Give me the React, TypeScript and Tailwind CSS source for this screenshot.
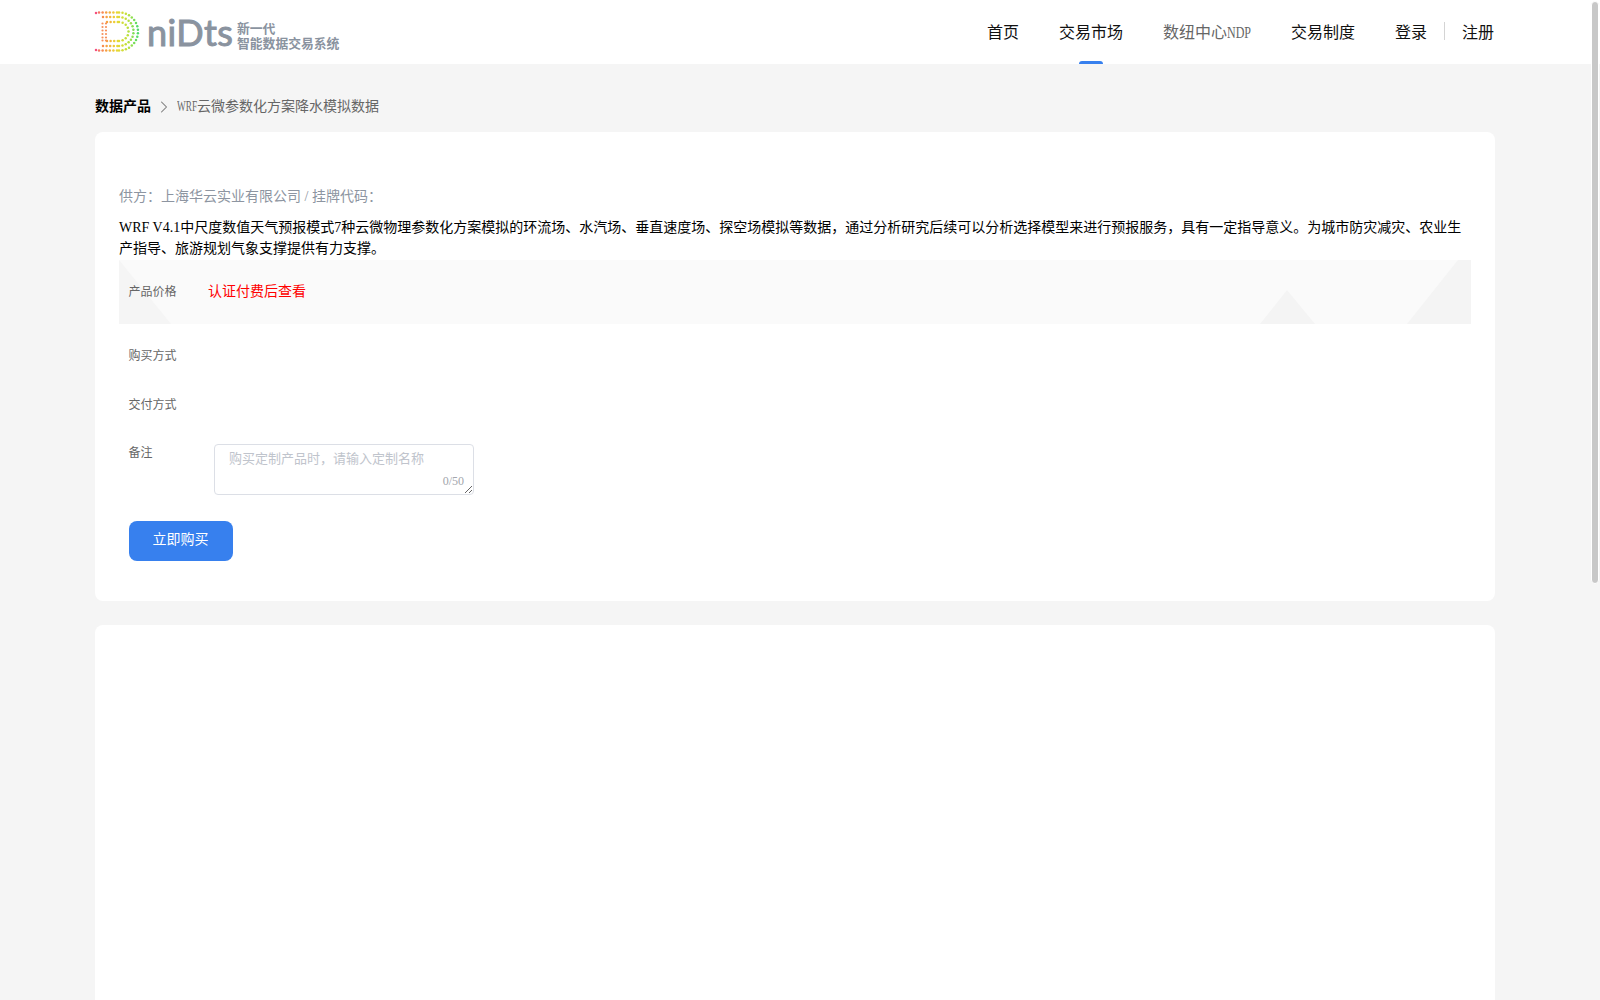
import React from 'react';
import { ChevronRight } from 'lucide-react';

const mix = (a: number[], b: number[], t: number) =>
  `rgb(${a.map((v, i) => Math.round(v + (b[i] - v) * t)).join(',')})`;

// pink on the left, through orange and yellow, to green on the right
const dotColor = (x: number) => {
  const t = Math.min(1, Math.max(0, x / 46));
  const stops = [[244, 80, 130], [248, 150, 70], [236, 214, 50], [190, 224, 60], [70, 220, 110]];
  const p = t * (stops.length - 1);
  const i = Math.min(stops.length - 2, Math.floor(p));
  return mix(stops[i], stops[i + 1], p - i);
};

const ringDots = (r: number, startX: number, step: number) => {
  const cx = 26;
  const cy = 20;
  const dots: { x: number; y: number }[] = [];
  for (let x = startX; x < cx; x += step) {
    dots.push({ x, y: cy - r }, { x, y: cy + r });
  }
  const n = Math.round((Math.PI * r) / step);
  for (let i = 0; i <= n; i++) {
    const a = -Math.PI / 2 + (Math.PI * i) / n;
    dots.push({ x: cx + r * Math.cos(a), y: cy + r * Math.sin(a) });
  }
  return dots;
};

const LogoMark = () => {
  const dots = [
    ...ringDots(19, 6, 3.6),
    ...ringDots(14.5, 10, 3.6),
    ...ringDots(9.5, 14, 3.6),
  ];
  const stem = [9.5, 13].flatMap((x) => [12, 15.5, 19, 22.5, 26, 29].map((y) => ({ x, y })));
  return (
    <svg width="48" height="42" viewBox="0 0 48 41" className="shrink-0 -ml-[2px]">
      {dots.map((d, i) => (
        <circle key={i} cx={d.x} cy={d.y} r="1.25" fill={dotColor(d.x)} />
      ))}
      {stem.map((d, i) => (
        <circle key={i} cx={d.x} cy={d.y} r="1.1" fill="#f7905a" />
      ))}
      <circle cx="3" cy="1.5" r="1.25" fill="#f4507f" />
      <circle cx="3" cy="38.5" r="1.25" fill="#f4507f" />
    </svg>
  );
};

const Logo = () => (
  <div className="flex items-center h-16 text-[#8a939f]">
    <LogoMark />
    <span className="ml-[6px] w-[84px] font-['Lato','Liberation_Sans',sans-serif] text-[36px] leading-none font-normal tracking-[0.4px] [-webkit-text-stroke:1px_#8a939f]">
      niDts
    </span>
    <div className="ml-[6px] pt-[5px] text-[12.8px] leading-[15px] font-semibold font-['Noto_Sans_CJK_SC',sans-serif]">
      <div>新一代</div>
      <div>智能数据交易系统</div>
    </div>
  </div>
);

const Header = () => (
  <header className="bg-white h-16">
    <div className="w-[1400px] h-full mx-auto flex items-center justify-between">
      <Logo />
      <nav className="flex items-center mr-[1px] pt-[1px] text-base text-[#111]">
        <a className="h-16 flex items-center">首页</a>
        <a className="relative h-16 -mt-[1px] pt-[1px] flex items-center ml-10">
          交易市场
          <span className="absolute bottom-0 left-[20px] w-6 h-[3px] rounded-t-sm bg-[#3780ee]" />
        </a>
        <a className="h-16 flex items-center ml-10 text-[#666]">
          数纽中心
          <span className="inline-block w-6 scale-x-[0.75] origin-left whitespace-nowrap">NDP</span>
        </a>
        <a className="h-16 flex items-center ml-10">交易制度</a>
        <a className="h-16 flex items-center ml-10">登录</a>
        <span className="w-px h-[18px] bg-[#d4d4d4] ml-[17px] mr-[17px] -mt-[4px]" />
        <a className="h-16 flex items-center">注册</a>
      </nav>
    </div>
  </header>
);

const Breadcrumb = () => (
  <div className="h-[68px] pt-[17px] flex items-center text-sm">
    <span className="font-bold text-black">数据产品</span>
    <ChevronRight size={20} strokeWidth={1.25} className="text-[#777] ml-[3px] mr-[3px]" />
    <span className="text-[#666]">
      <span className="inline-block w-5 scale-x-[0.66] origin-left whitespace-nowrap">WRF</span>
      云微参数化方案降水模拟数据
    </span>
  </div>
);

const PriceBand = () => (
  <div className="relative h-16 mt-[1.5px] bg-[#fafafa] flex items-center overflow-hidden">
    <svg className="absolute inset-0 w-full h-full" viewBox="0 0 1352 64" preserveAspectRatio="none">
      <polygon points="0,0 52,64 0,64" fill="#f5f5f5" />
      <polygon points="1141,64 1168,30 1196,64" fill="#f4f4f4" />
      <polygon points="1288,64 1339,0 1352,0 1352,64" fill="#f4f4f4" />
    </svg>
    <span className="relative w-[89px] pl-[9.5px] text-xs text-[#666]">产品价格</span>
    <span className="relative -mt-[1px] text-sm text-[#ff0000]">认证付费后查看</span>
  </div>
);

const FieldRow = ({ label }: { label: string }) => (
  <div className="h-[48.5px] flex items-center">
    <span className="w-[90px] pl-[9.5px] text-xs text-[#666]">{label}</span>
  </div>
);

const RemarkRow = () => (
  <div className="flex mt-[15px]">
    <span className="w-[90px] pl-[9.5px] pt-[1px] text-xs leading-[16px] text-[#666]">备注</span>
    <div className="relative ml-[5px] w-[260px] h-[51px]">
      <textarea
        placeholder="购买定制产品时，请输入定制名称"
        className="block w-full h-full px-[14px] py-[4px] text-[13px] leading-[20px] border border-[#dcdfe6] rounded bg-white outline-none placeholder:text-[#c0c4cc]"
      />
      <span className="absolute right-[10px] bottom-[6px] text-xs leading-[16px] text-[#a3a6ad]">0/50</span>
    </div>
  </div>
);

export default function App() {
  return (
    <div className="relative h-screen overflow-hidden bg-[#f5f5f5] font-['Liberation_Serif','Noto_Sans_CJK_SC',serif]">
      <div className="w-[1590px]">
        <div className="w-[1600px] bg-white">
          <div className="w-[1590px]">
            <Header />
          </div>
        </div>
        <main className="w-[1400px] mx-auto">
          <Breadcrumb />
          <section className="bg-white rounded-lg h-[469px] px-6 pt-[55px]">
            <p className="text-sm leading-5 text-[#8d95a1]">供方：上海华云实业有限公司 / 挂牌代码：</p>
            <p className="mt-[9.5px] text-sm leading-[21px] text-black">
              WRF V4.1中尺度数值天气预报模式7种云微物理参数化方案模拟的环流场、水汽场、垂直速度场、探空场模拟等数据，通过分析研究后续可以分析选择模型来进行预报服务，具有一定指导意义。为城市防灾减灾、农业生产指导、旅游规划气象支撑提供有力支撑。
            </p>
            <PriceBand />
            <div className="mt-[8px]">
              <FieldRow label="购买方式" />
              <FieldRow label="交付方式" />
            </div>
            <RemarkRow />
            <button className="block ml-[10px] mt-[26px] w-[104px] h-10 pr-[1px] pb-[2px] rounded-lg bg-[#3780ee] text-sm text-white">
              立即购买
            </button>
          </section>
          <section className="bg-white rounded-lg h-[600px] mt-6" />
        </main>
      </div>
      {/* scrollbar thumb sits over the page */}
      <div className="absolute top-[1px] right-[1px] w-2 h-[583px] rounded-full border border-white bg-[#c8c8c8]" />
    </div>
  );
}
